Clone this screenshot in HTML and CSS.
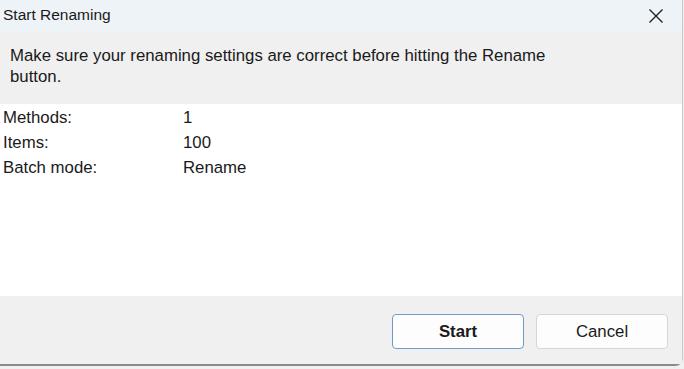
FILE: index.html
```html
<!DOCTYPE html>
<html>
<head>
<meta charset="utf-8">
<link rel="stylesheet" href="styles.css">
</head>
<body>
<div class="dialog">
  <div class="titlebar">
    <span class="title">Start Renaming</span>
    <svg class="close" width="16" height="16" viewBox="0 0 16 16"><path d="M1.5 1.5L14.5 14.5M14.5 1.5L1.5 14.5" stroke="#222" stroke-width="1.4" fill="none"/></svg>
  </div>
  <div class="header">
    <p>Make sure your renaming settings are correct before hitting the Rename button.</p>
  </div>
  <div class="content">
    <div class="row"><span class="label">Methods:</span><span>1</span></div>
    <div class="row"><span class="label">Items:</span><span>100</span></div>
    <div class="row"><span class="label">Batch mode:</span><span>Rename</span></div>
  </div>
  <div class="footer">
    <button class="btn primary">Start</button>
    <button class="btn">Cancel</button>
  </div>
</div>
</body>
</html>
```
FILE: styles.css
```css
html, body { margin: 0; padding: 0; background: #f0f0f0; }
body { width: 684px; height: 369px; overflow: hidden; font-family: "Liberation Sans", Arial, sans-serif; font-size: 16.8px; color: #1a1a1a; }
.dialog { display: flex; flex-direction: column; height: 366px; border-bottom: 2px solid #8a8a8a; border-bottom-right-radius: 8px; box-sizing: border-box; width: 683px; border-right: 1px solid #c8c8c8; }
.titlebar { height: 31px; background: #eef3f8; display: flex; align-items: center; justify-content: space-between; padding: 0 18px 0 3px; }
.title { font-size: 15.5px; color: #1a1a1a; margin-top: -2px; }
.close { display: block; }
.header { background: #f0f0f0; height: 73px; padding: 14px 10px 0; box-sizing: border-box; }
.header p { margin: 0; line-height: 21px; width: 580px; }
.content { background: #fff; height: 192px; padding: 1px 3px 0; box-sizing: border-box; }
.row { display: flex; height: 25px; line-height: 25px; }
.label { width: 180px; }
.footer { flex: 1; background: #f0f0f0; display: flex; justify-content: flex-end; align-items: flex-start; padding: 18px 14px 0 0; gap: 12px; }
.btn { width: 132px; height: 35px; font-family: inherit; font-size: 16.8px; background: #fdfdfd; border: 1px solid #d6d6d6; border-radius: 4px; color: #1a1a1a; padding: 0; }
.btn.primary { border-color: #6f9cc6; font-weight: bold; }
```
